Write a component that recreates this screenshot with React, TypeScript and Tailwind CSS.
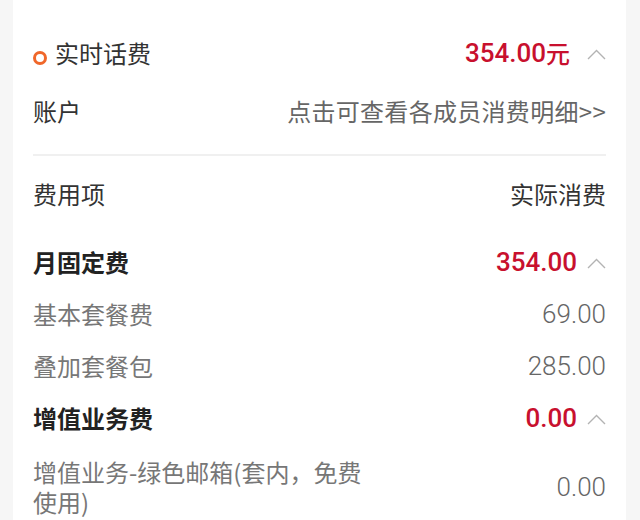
import React from "react";

const cjk = { fontFamily: '"Noto Sans CJK SC", "Noto Sans", sans-serif' };
const num = { fontFamily: 'Roboto, "Noto Sans CJK SC", sans-serif' };

function Chevron({ className = "" }: { className?: string }) {
  return (
    <svg width="19" height="11" viewBox="0 0 19 11" className={className}>
      <polyline points="1,10 9.5,1.5 18,10" fill="none" stroke="#b3b3b3" strokeWidth="1.4" />
    </svg>
  );
}

export default function App() {
  return (
    <div className="w-[640px] h-[520px] overflow-hidden bg-[#f6f6f6] pl-[13px] pr-[14px]" style={cjk}>
      <div className="h-full bg-white px-[20px] pt-[25px]">
        {/* 实时话费 */}
        <div className="flex h-[56px] items-center justify-between">
          <div className="flex items-center">
            <span className="mt-[9px] box-border inline-block h-[14px] w-[14px] shrink-0 rounded-full border-[3px] border-solid border-[#f0672a]" />
            <span className="ml-[8px] text-[24px] text-[#333]">实时话费</span>
          </div>
          <div className="flex items-center">
            <span className="text-[26px] font-medium text-[#c8102e]" style={num}>354.00</span>
            <span className="text-[24px] font-medium text-[#c8102e]">元</span>
            <Chevron className="ml-[17px] mt-[3px]" />
          </div>
        </div>
        {/* 账户 */}
        <div className="flex h-[60px] items-center justify-between">
          <span className="text-[24px] text-[#333]">账户</span>
          <span className="text-[24px] tracking-[0.3px] text-[#666]">点击可查看各成员消费明细&gt;&gt;</span>
        </div>
        <div className="mt-[13px] h-[2px] bg-[#f0f0f0]" />
        {/* header */}
        <div className="flex h-[80px] items-center justify-between pb-[4px]">
          <span className="text-[24px] text-[#333]">费用项</span>
          <span className="text-[24px] text-[#333]">实际消费</span>
        </div>
        {/* 月固定费 */}
        <div className="flex h-[52px] items-center justify-between">
          <span className="text-[24px] font-bold text-[#222]">月固定费</span>
          <div className="flex items-center">
            <span className="text-[26px] font-medium text-[#c8102e]" style={num}>354.00</span>
            <Chevron className="ml-[10px] mt-[3px]" />
          </div>
        </div>
        <div className="flex h-[52px] items-center justify-between">
          <span className="text-[24px] text-[#777]">基本套餐费</span>
          <span className="text-[26px] font-light text-[#666]" style={num}>69.00</span>
        </div>
        <div className="flex h-[52px] items-center justify-between">
          <span className="text-[24px] text-[#777]">叠加套餐包</span>
          <span className="text-[26px] font-light text-[#666]" style={num}>285.00</span>
        </div>
        {/* 增值业务费 */}
        <div className="flex h-[52px] items-center justify-between">
          <span className="text-[24px] font-bold text-[#222]">增值业务费</span>
          <div className="flex items-center">
            <span className="text-[26px] font-medium text-[#c8102e]" style={num}>0.00</span>
            <Chevron className="ml-[10px] mt-[3px]" />
          </div>
        </div>
        <div className="flex items-center justify-between pt-[13px]">
          <span className="w-[345px] text-[24px] leading-[30px] text-[#777]">增值业务-绿色邮箱(套内，免费使用)</span>
          <span className="text-[26px] font-light text-[#666]" style={num}>0.00</span>
        </div>
      </div>
    </div>
  );
}
